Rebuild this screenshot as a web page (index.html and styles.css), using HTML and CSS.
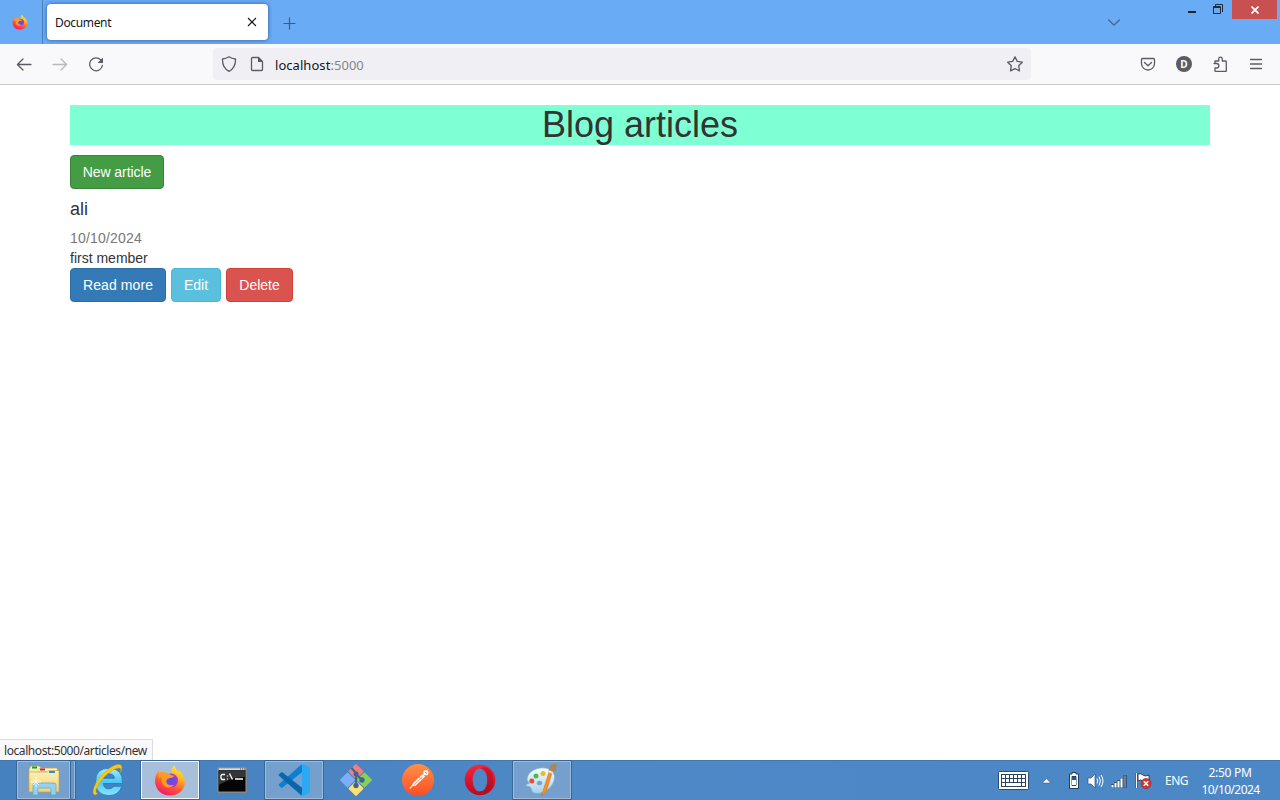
FILE: index.html
```html
<!DOCTYPE html>
<html lang="en">
<head>
<meta charset="utf-8">
<title>Document</title>
<link rel="stylesheet" href="styles.css">
</head>
<body>
<svg class="defs" width="0" height="0">
  <defs>
    <linearGradient id="flame" x1=".8" y1="0" x2=".3" y2="1"><stop offset="0" stop-color="#fff14a"/><stop offset=".35" stop-color="#ffb31f"/><stop offset=".65" stop-color="#ff5a35"/><stop offset="1" stop-color="#f5156c"/></linearGradient>
    <radialGradient id="globe"><stop offset="0" stop-color="#5b4be0"/><stop offset="1" stop-color="#9a3fd8"/></radialGradient>
    <linearGradient id="ie" x2="0" y2="1"><stop offset="0" stop-color="#a5ecfd"/><stop offset=".5" stop-color="#4cc8f4"/><stop offset="1" stop-color="#8ce4fb"/></linearGradient>
    <linearGradient id="folder" x2="0" y2="1"><stop offset="0" stop-color="#fdf2b8"/><stop offset="1" stop-color="#efd078"/></linearGradient>
    <linearGradient id="orange" x2="0" y2="1"><stop offset="0" stop-color="#ff9046"/><stop offset="1" stop-color="#fd4d25"/></linearGradient>
    <linearGradient id="red" x2="0" y2="1"><stop offset="0" stop-color="#ff2338"/><stop offset="1" stop-color="#b90a1c"/></linearGradient>
    <linearGradient id="palette" x2="0" y2="1"><stop offset="0" stop-color="#f4fcff"/><stop offset="1" stop-color="#a9d2ea"/></linearGradient>
    <symbol id="firefox" viewBox="0 0 32 32">
      <path fill="url(#flame)" d="M20.600 1c.5 3.500 2.300 4.800 4 7.200.1-1-.2-1.700-.4-2.400 5.200 4.200 7.300 9.400 6.500 14.400C29.500 27 23.600 31.500 16 31.500 7.600 31.500 1 25.500 1 17c0-4.300 1.800-8.200 3.700-10.500.1 1.200.4 2 .9 2.600C7 7.600 8.400 6.800 9.600 6.500c-.2 1.200.1 2.200.9 3 2.300-.5 4.500-.2 6.300.7C16.700 6.500 18 3.500 20.600 1z"/>
      <circle cx="17" cy="16.500" r="7" fill="url(#globe)"/>
      <path fill="#ff9a22" d="M4.500 10c3-2.500 8-2 11.300.3 1.200.8 3 1.400 4.800 1.200-.7 1.700-2.500 2.300-4.500 2.600-2.700.4-4.200 2-3.700 4.100.7 2.800 4.600 4 7.500 2.500-2.100 3.900-9 3.700-11.500-.8-1.300-2.300-1.200-5 .1-6.600-1.400-.1-2.600.2-3.900.9z"/>
    </symbol>
  </defs>
</svg>

<header class="tabbar">
  <div class="view"><svg width="16" height="16"><use href="#firefox"/></svg></div>
  <div class="tab"><span class="tab-title">Document</span>
    <svg width="10" height="10" viewBox="0 0 10 10"><path d="M1 1l8 8M9 1l-8 8" stroke="#15141a" stroke-width="1.100"/></svg>
  </div>
  <svg class="newtab" width="13" height="13" viewBox="0 0 13 13"><path d="M6.500 .5v12M.5 6.500h12" stroke="#4b5670" stroke-width="1.200"/></svg>
  <svg class="alltabs" width="14" height="9" viewBox="0 0 14 9"><path d="M1.200 1.500L7 7.200l5.800-5.700" fill="none" stroke="#4f6280" stroke-width="1.300"/></svg>
  <div class="window-controls">
    <svg width="8" height="14" viewBox="0 0 8 14"><path d="M0 11h8v2H0z" fill="#222"/></svg>
    <svg width="11" height="12" viewBox="0 0 11 12"><path d="M.5 2.500h7v7h-7zM0 3.500h8M2.500 2V.5H9.500v7.500" fill="none" stroke="#202a38"/></svg>
    <div class="close"><svg width="8" height="8" viewBox="0 0 8 8"><path d="M.5.5l7 7M7.500.5l-7 7" stroke="#fff" stroke-width="1.700"/></svg></div>
  </div>
</header>

<nav class="toolbar">
  <div class="nav-buttons">
    <svg width="16" height="16" viewBox="0 0 16 16"><path d="M15 8.500H1.500M7 3L1.400 8.500 7 14" class="line"/></svg>
    <svg class="dim" width="16" height="16" viewBox="0 0 16 16"><path d="M1 8.500h13.500M9 3l5.600 5.500L9 14" class="line"/></svg>
    <svg width="16" height="16" viewBox="0 0 16 16"><path d="M12.800 4A6.400 6.400 0 1 0 14.400 9.500" class="line"/><path d="M15 1.500v5.500H9.500z" fill="#5b5b66"/></svg>
  </div>
  <div class="urlbar">
    <svg width="16" height="16" viewBox="0 0 16 16"><path d="M8 .8C6 2.200 4 2.800 1.500 3 1.300 8.500 3 13 8 15.300 13 13 14.700 8.500 14.500 3 12 2.800 10 2.200 8 .8z" class="line"/></svg>
    <svg class="page-icon" width="16" height="16" viewBox="0 0 16 16"><path d="M3.500 1.500h6l4 4v8a1 1 0 0 1-1 1h-9a1 1 0 0 1-1-1v-11a1 1 0 0 1 1-1z" class="line"/><path d="M9 1l5 5H9z" fill="#5b5b66"/></svg>
    <span class="address">localhost<span class="port">:5000</span></span>
    <svg class="star" width="18" height="16" viewBox="0 0 18 16"><path d="M9 .9l2.300 4.500 5 .8-3.600 3.500.8 5.200L9 12.600l-4.500 2.300.8-5.200L1.700 6.200l5-.8z" class="line"/></svg>
  </div>
  <div class="actions">
    <svg width="16" height="16" viewBox="0 0 16 16"><path d="M2.700 2.500h10.600q1.200 0 1.200 1.200v3.800a6.500 6.500 0 0 1-13 0V3.700Q1.500 2.500 2.700 2.500zM4.500 6.500L8 9.800l3.500-3.300" class="line"/></svg>
    <span class="avatar">D</span>
    <svg width="16" height="16" viewBox="0 0 16 16"><path d="M3 7.500V5H6.700V3a1.800 1.800 0 0 1 3.600 0v2h3.200q.8 0 .8.800v8.900q0 .8-.8.800H3.800q-.8 0-.8-.8V12h1.600a1.500 1.500 0 0 0 0-4.500H2" class="line"/></svg>
    <svg width="16" height="16" viewBox="0 0 16 16"><path d="M2.500 3.500h11M2.500 8h11M2.500 12.500h11" class="line"/></svg>
  </div>
</nav>

<main class="page">
  <h1 class="heading">Blog articles</h1>
  <a class="btn success">New article</a>
  <article>
    <h4 class="article-title">ali</h4>
    <div class="date">10/10/2024</div>
    <div class="description">first member</div>
    <div class="buttons">
      <a class="btn primary">Read more</a>
      <a class="btn info">Edit</a>
      <a class="btn danger">Delete</a>
    </div>
  </article>
  <div class="status"><span>localhost:5000/articles/new</span></div>
</main>

<footer class="taskbar">
  <div class="apps">
    <div class="app open stacked"><svg width="34" height="32" viewBox="0 0 34 32">
      <path d="M2 5l2-3h8l2 2h16v22H2z" fill="url(#folder)" stroke="#c6a14e" stroke-width=".6"/><path d="M5 2.500h5v2H5z" fill="#08a52b"/><path d="M12 4.500h18v3H12z" fill="#fffbe3" stroke="#d6b866" stroke-width=".5"/><path d="M13 4.500h5v2h-5z" fill="#c82c1e"/><path d="M2 8h18l2-1.500h10V28H2z" fill="url(#folder)" stroke="#c6a14e" stroke-width=".7"/><path d="M22 7h6v2h-6z" fill="#1b97e8"/><path d="M6 31V21q0-2 2-2h19q2 0 2 2v10h-5v-6q0-1-1-1H12q-1 0-1 1v6z" fill="#93d1f0" stroke="#5aa8d6" stroke-width=".7"/><path d="M9 13v10M4 18h10M6 15l6 6M12 15l-6 6" stroke="#fff" stroke-width=".8"/></svg></div>
    <div class="app"><svg width="34" height="34" viewBox="0 0 34 34">
      <path fill-rule="evenodd" d="M31.500 20.500H12.200q.5 5.300 5.600 5.300 3.300 0 5-2.500h8Q28 32.500 17.700 32.500 4.500 32 4.500 18.700 4.500 5.300 18 5.300 32 5.300 31.500 20.500zM12.300 15.300h11.200q-.4-4.300-5.500-4.500-4.600 0-5.700 4.500z" fill="url(#ie)" stroke="#167fc4" stroke-width=".8"/>
      <path d="M6.800 30.500C1 35 .5 27 6 18.500 12 9 22 1.300 28 1.600c3.700.2 3.300 4.300 1.500 8 1-3.500.4-5-2.300-4.600C21 6 12.500 13.500 8 20.500c-3.300 5-4.200 9.500-1.200 10z" fill="#fbc915" stroke="#d99a0b" stroke-width=".5"/></svg></div>
    <div class="app open active"><svg width="32" height="32"><use href="#firefox"/></svg></div>
    <div class="app cmd"><svg width="30" height="26" viewBox="0 0 30 26"><path d="M.8.8h28.400v24.400H.8z" fill="#050505" stroke="#888" stroke-width="1.500"/><path d="M1.500 1.200h27v2h-27z" fill="#d7dce0"/><path d="M2 4h26v6Q15 10 2 18z" fill="#353535"/><path d="M23 1.500h1v1h-1zM25 1.500h1v1h-1zM27 1.500h1v1h-1z" fill="#555"/><path d="M8 7.500H5L4 8.500v3l1 1h3M10.500 8.500v1M10.500 11.500v1M12.500 6.500l3 6M18 12h8" fill="none" stroke="#fff" stroke-width="1.300"/></svg></div>
    <div class="app open"><svg width="32" height="32" viewBox="0 0 32 32"><path d="M24 0L1 20.200q-.8.8 0 1.600l2 1.800q.8.500 1.600 0L24 8.300z" fill="#0a80cf"/><path d="M24 32L1 11.800q-.8-.8 0-1.600l2-1.800q.8-.5 1.600 0L24 23.700z" fill="#0766ad"/><path d="M24 0l7 3q1 .5 1 1.500v23q0 1-1 1.500l-7 3q-1 .3-2-.7 2 .5 2-2.300V3q0-2.500-2-2.300 1-1 2-.7z" fill="#2aa9f4"/></svg></div>
    <div class="app"><svg width="34" height="34" viewBox="0 0 34 34"><g transform="rotate(45 17 17)"><rect x="5.500" y="5.500" width="11" height="11" rx="1" fill="#f57d81"/><rect x="17.500" y="5.500" width="11" height="11" rx="1" fill="#87d35a"/><rect x="5.500" y="17.500" width="11" height="11" rx="1" fill="#7eaef8"/><rect x="17.500" y="17.500" width="11" height="11" rx="1" fill="#ffe173"/></g><path d="M12.500 5l4.500 5v12M17 11l6 6" fill="none" stroke="#3f6590" stroke-width="2"/><circle cx="17" cy="11" r="2.500" fill="#3f6590"/><circle cx="17" cy="22.500" r="2.700" fill="#3f6590"/><circle cx="23" cy="17" r="2.700" fill="#3f6590"/></svg></div>
    <div class="app"><svg width="32" height="32" viewBox="0 0 32 32"><circle cx="16" cy="16" r="16" fill="url(#orange)"/><circle cx="23.800" cy="8.700" r="2.600" fill="#fff"/><path d="M23 8l2 1.600" stroke="#ff6d37"/><path d="M20.800 10.800l1.500 1.600-9.300 9-2.700.3 1.200-2.300zM10.700 21.300l-2.900 3" fill="#fff" stroke="#fff" stroke-width="1.100"/><path d="M20.300 12.800l-8.300 8M17 13.500l3 1.300" stroke="#ff7440" stroke-width=".7"/></svg></div>
    <div class="app"><svg width="32" height="32" viewBox="0 0 32 32"><path fill="url(#red)" fill-rule="evenodd" d="M16 .7a15.300 15.300 0 1 0 0 30.600A15.300 15.300 0 1 0 16 .7zM16 4.400c4.400 0 7.300 5 7.300 11.600S20.400 27.600 16 27.600 8.700 22.600 8.700 16 11.600 4.400 16 4.400z"/><path d="M16 4.400c4.400 0 7.300 5 7.300 11.600S20.400 27.600 16 27.600c8 4 13-3 13-11.600S24 .4 16 4.400z" fill="#a70b1b" opacity=".45"/></svg></div>
    <div class="app open"><svg width="34" height="34" viewBox="0 0 34 34"><path fill="url(#palette)" fill-rule="evenodd" stroke="#79abc9" stroke-width=".7" d="M2 16C3 8 12 4 20 5c8 1 11 7 9 13-3 9-13 14-20 12-3-1-2-5-4-6-1-.5-4-.3-4-2 0-2 3 0 3-2 0-1-2.300-2-2-4zm10 4a2.500 2 0 1 0 5 0 2.500 2 0 1 0-5 0z"/><circle cx="6.800" cy="18" r="2.500" fill="#e64c40"/><circle cx="11" cy="13" r="2.500" fill="#55b844"/><circle cx="18" cy="10.500" r="2.500" fill="#f5b52b"/><path d="M27 10l-6 19-4 4 1-5 6-19z" fill="#f39126" stroke="#cf6a14" stroke-width=".5"/><path d="M25 3q4-3 7-2-1 3-1 6l-4 4-4-2z" fill="#a9865b"/><path d="M23 8l5 2" stroke="#e6e7e5" stroke-width="2"/></svg></div>
  </div>
  <div class="tray">
    <svg class="keyboard" width="31" height="19" viewBox="0 0 31 19"><rect x=".5" y=".5" width="30" height="18" rx="1" fill="#fff" stroke="#294e78"/><path d="M3 3h25v13H3z" fill="#27435f"/><path d="M4 4h3v3H4zM8 4h3v3H8zM12 4h3v3h-3zM16 4h3v3h-3zM20 4h3v3h-3zM24 4h3v3h-3zM4 8h3v3H4zM8 8h3v3H8zM12 8h3v3h-3zM16 8h3v3h-3zM20 8h3v3h-3zM24 8h3v3h-3zM4 12h3v3H4zM8 12h15v3H8zM24 12h3v3h-3z" fill="#fff"/></svg>
    <svg class="caret" width="9" height="6" viewBox="0 0 9 6"><path d="M4.500.5L8.500 5H.5z" fill="#fff" stroke="#31577f" stroke-width=".5"/></svg>
    <svg class="battery" width="10" height="17" viewBox="0 0 10 17"><path d="M3 .5h4V2h2.500v14.500h-9V2H3z" fill="#fff" stroke="#24415f"/><path d="M3 4.500h4v9H3z" fill="#fff" stroke="#24415f"/><path d="M3 8h4v5H3z" fill="#fff"/><path d="M3 5h4v3H3z" fill="#31577f"/></svg>
    <svg class="speaker" width="17" height="16" viewBox="0 0 17 16"><path d="M1 5h3l4-4v14l-4-4H1z" fill="#fff" stroke="#31577f" stroke-width=".7"/><path d="M10 5.500q1.500 2.500 0 5M12 3.500q3 4.500 0 9M14 2q4 6 0 12" fill="none" stroke="#fff" stroke-width="1"/></svg>
    <svg class="signal" width="16" height="14" viewBox="0 0 16 14"><path d="M0 10h3v4H0zM3 8h3v6H3zM6 6h3v8H6zM9 4h3v10H9zM12 1h4v13h-4z" fill="#31577f"/><path d="M.5 11h2v2.500h-2zM3.500 9h2v4.500h-2zM6.500 7h2v6.500h-2zM9.500 4.500h2v9h-2z" fill="#fff"/><path d="M12.500 1.500h2.500v12h-2.500z" fill="#6c7e90"/></svg>
    <svg class="flag" width="17" height="17" viewBox="0 0 17 17"><path d="M1.500 1v15" stroke="#24415f" stroke-width="3"/><path d="M1.500 1v15" stroke="#fff" stroke-width="1.400"/><path d="M3 2q3-1 5 1t6 0v7q-4 1-6-1t-5 0z" fill="#fff" stroke="#24415f"/><circle cx="11" cy="11.500" r="5" fill="#dc3328" stroke="#a71b18" stroke-width=".6"/><path d="M8.800 9.300l4.400 4.400M13.200 9.300l-4.400 4.400" stroke="#fff" stroke-width="1.600"/></svg>
    <span class="language">ENG</span>
    <div class="clock"><span class="time">2:50 PM</span><span class="day">10/10/2024</span></div>
  </div>
</footer>
</body>
</html>
```

FILE: styles.css
```css
* { box-sizing: border-box; }
body { margin: 0; width: 1280px; height: 800px; overflow: hidden; display: flex; flex-direction: column; background: #fff; font-family: "Noto Sans", sans-serif; }
svg { display: block; flex: none; }
.defs { position: absolute; }
.line { fill: none; stroke: #5b5b66; stroke-width: 1.3; stroke-linejoin: round; stroke-linecap: round; }

.tabbar { height: 44px; flex: none; display: flex; align-items: center; background: #6aabf6; }
.view { width: 43px; height: 44px; padding: 14px 0 0 12px; border-right: 1px solid #4a81bd; }
.tab { width: 221px; height: 36px; margin-left: 4px; padding: 0 11px 0 8px; display: flex; align-items: center; justify-content: space-between; background: #fff; border-radius: 4px; box-shadow: 0 0 4px rgba(20, 50, 100, .65); }
.tab-title { font-size: 12px; letter-spacing: -.35px; color: #15141a; }
.newtab { margin: 2px 0 0 15px; }
.alltabs { margin-left: 811px; }
.window-controls { margin-left: auto; align-self: flex-start; display: flex; margin-right: 3px; }
.window-controls > svg:nth-child(2) { margin: 4px 8px 0 17px; }
.close { width: 45px; height: 19px; display: grid; place-items: center; background: #c75050; }

.toolbar { height: 41px; flex: none; padding: 0 16px; display: flex; align-items: center; background: #f9f9fb; border-bottom: 1px solid #ccc; }
.nav-buttons, .actions { display: flex; gap: 20px; align-items: center; }
.dim { opacity: .4; }
.urlbar { width: 818px; height: 32px; margin-left: 109px; padding: 0 7px 0 8px; display: flex; align-items: center; background: #f0f0f4; border-radius: 4px; }
.page-icon { margin-left: 12px; }
.address { margin: 1px 0 0 10px; font-size: 13px; letter-spacing: .05px; color: #15141a; }
.port { color: #858589; }
.star { margin-left: auto; }
.actions { margin-left: auto; }
.avatar { width: 16px; height: 16px; border-radius: 50%; background: #5b5b66; color: #fff; font: bold 10px/16px "Open Sans", sans-serif; text-align: center; }

.page { flex: 1; position: relative; padding: 20px 70px 0; font: 14px/20px "Liberation Sans", Arial, sans-serif; color: #333; }
.heading { margin: 0 0 10px; height: 40px; font-size: 36px; line-height: 40px; font-weight: 500; text-align: center; background: #7fffd4; }
.btn { display: inline-block; height: 34px; padding: 6px 0; border: 1px solid; border-radius: 4px; color: #fff; text-align: center; vertical-align: top; }
.success { width: 94px; background: #449d44; border-color: #398439; letter-spacing: -.05px; }
.primary { width: 96px; background: #337ab7; border-color: #2e6da4; letter-spacing: .1px; }
.info { width: 50px; background: #5bc0de; border-color: #46b8da; }
.danger { width: 67px; background: #d9534f; border-color: #d43f3a; }
.article-title { margin: 10px 0 9px; font-size: 18px; line-height: 20px; font-weight: 500; }
.date { color: #777; letter-spacing: .2px; }
.buttons { display: flex; gap: 5px; }
.status { position: absolute; left: 0; bottom: 0; height: 21px; width: 153px; padding-left: 4px; border: 1px solid #ddd; border-width: 1px 1px 0 0; background: #f9f9fb; color: #333; font: 12px/22px "Noto Sans", sans-serif; letter-spacing: -.42px; white-space: nowrap; }

.taskbar { height: 40px; flex: none; display: flex; justify-content: space-between; background: linear-gradient(90deg, #4580bf, #4e88c5 45%, #4c87c6); box-shadow: inset 0 1px #4378ae; color: #fff; }
.apps { display: flex; gap: 2px; padding-left: 16px; }
.app { width: 60px; height: 40px; display: grid; place-items: center; }
.open { border: 1px solid #376899; box-shadow: inset 0 0 0 1px #9cbadb; background: #759fcd; }
.active { background: #a8bfdc; box-shadow: inset 0 0 0 1px #f3f7fb; }
.stacked { box-shadow: inset -1px 0 #9cbadb, inset -4px 0 #6695c8, inset -5px 0 #376899, inset -6px 0 #9cbadb, inset 0 0 0 1px #9cbadb; padding-right: 4px; }
.cmd { padding-right: 1px; }
.tray { display: flex; align-items: center; padding-top: 1px; font-size: 12px; }
.keyboard { margin-right: -1px; }
.caret { margin-left: 14px; }
.battery { margin-left: 18px; }
.speaker { margin-left: 8px; }
.signal { margin-left: 7px; }
.flag { margin-left: 8px; }
.language { margin-left: 13px; width: 24px; letter-spacing: -.5px; }
.clock { width: 59px; margin: 0 20px 0 12px; display: flex; flex-direction: column; text-align: center; line-height: 17px; white-space: nowrap; }
.time { letter-spacing: -.3px; margin-right: 1px; }
.day { letter-spacing: -.6px; }
```
